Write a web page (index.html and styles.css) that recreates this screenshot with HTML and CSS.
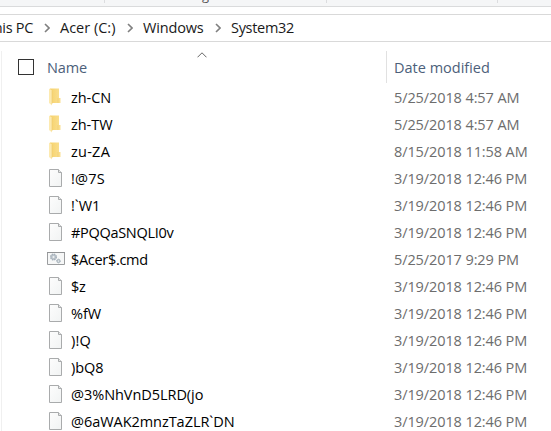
FILE: index.html
```html
<!DOCTYPE html>
<html lang="en">
<head>
<meta charset="utf-8">
<title>System32</title>
<link rel="stylesheet" href="styles.css">
</head>
<body>
<svg width="0" height="0" class="defs">
  <defs>
    <linearGradient id="gold" x2="1"><stop offset="0" stop-color="#f6d26c"/><stop offset="1" stop-color="#fae092"/></linearGradient>
    <linearGradient id="paper" x2="1" y2="1"><stop offset="0" stop-color="#fdfdfd"/><stop offset="1" stop-color="#f1f3f3"/></linearGradient>
    <symbol id="folder" viewBox="0 0 18 20"><path d="M3 1.5H12V11H13.5V16H3Z" fill="url(#gold)"/><path d="M2 1.5L5 3.5V18.5L2 16Z" fill="#fdeab0"/><path d="M5 3.5V17" stroke="#edca6b" stroke-width=".6"/><path d="M11 11V16" stroke="#edcb70" stroke-width=".6"/></symbol>
    <symbol id="file" viewBox="0 0 18 20"><path d="M2.5 1.5H11.5L14.5 4.5V18.5H2.5Z" fill="url(#paper)" stroke="#a9abac"/><path d="M11.5 1.5V4.5H14.5" fill="#e6e7e7" stroke="#a9abac"/></symbol>
    <symbol id="cmd" viewBox="0 0 18 20"><path d="M.5 3.5H17.5V15.5H.5Z" fill="#f6f7f7" stroke="#9b9d9f"/><path d="M0 3.5H18" stroke="#929496"/><circle cx="6.5" cy="8" r="2.8" fill="#bdc5cc" stroke="#a5b0ba" stroke-width="1.4" stroke-dasharray="1.5 .7"/><circle cx="6.5" cy="8" r="1" fill="#eef1f3"/><circle cx="11.5" cy="12" r="1.8" fill="#bcc5cc" stroke="#9aa7b1" stroke-dasharray="1.2 .5"/><circle cx="11.5" cy="12" r=".6" fill="#fff"/></symbol>
    <symbol id="chev" viewBox="0 0 6 10"><path d="M1 1L5 5L1 9" fill="none" stroke="#808080" stroke-width="1.6"/></symbol>
  </defs>
</svg>
<div class="window">
  <div class="ribbon"><i></i><span>g</span><i></i><i></i></div>
  <nav class="address">
    <span class="crumb c1">This PC</span><svg class="chev"><use href="#chev"/></svg>
    <span class="crumb c2">Acer (C:)</span><svg class="chev"><use href="#chev"/></svg>
    <span class="crumb c3">Windows</span><svg class="chev"><use href="#chev"/></svg>
    <span class="crumb c4">System32</span>
  </nav>
  <main class="list">
    <div class="head">
      <div class="name-col"><b class="check"></b><span>Name</span><svg class="sort" viewBox="0 0 10 6"><path d="M.5 5.3L5 .8L9.5 5.3" fill="none" stroke="#666"/></svg></div>
      <div class="date-col">Date modified</div>
    </div>
    <div class="row"><svg><use href="#folder"/></svg><span class="name wide">zh-CN</span><span class="date">5/25/2018 4:57 AM</span></div>
    <div class="row"><svg><use href="#folder"/></svg><span class="name wide">zh-TW</span><span class="date">5/25/2018 4:57 AM</span></div>
    <div class="row"><svg><use href="#folder"/></svg><span class="name wider">zu-ZA</span><span class="date">8/15/2018 11:58 AM</span></div>
    <div class="row"><svg><use href="#file"/></svg><span class="name wider">!@7S</span><span class="date">3/19/2018 12:46 PM</span></div>
    <div class="row"><svg><use href="#file"/></svg><span class="name wide">!`W1</span><span class="date">3/19/2018 12:46 PM</span></div>
    <div class="row"><svg><use href="#file"/></svg><span class="name">#PQQaSNQLI0v</span><span class="date">3/19/2018 12:46 PM</span></div>
    <div class="row"><svg><use href="#cmd"/></svg><span class="name">$Acer$.cmd</span><span class="date">5/25/2017 9:29 PM</span></div>
    <div class="row"><svg><use href="#file"/></svg><span class="name">$z</span><span class="date">3/19/2018 12:46 PM</span></div>
    <div class="row"><svg><use href="#file"/></svg><span class="name wide">%fW</span><span class="date">3/19/2018 12:46 PM</span></div>
    <div class="row"><svg><use href="#file"/></svg><span class="name wider">)!Q</span><span class="date">3/19/2018 12:46 PM</span></div>
    <div class="row"><svg><use href="#file"/></svg><span class="name wide">)bQ8</span><span class="date">3/19/2018 12:46 PM</span></div>
    <div class="row"><svg><use href="#file"/></svg><span class="name wide">@3%NhVnD5LRD(jo</span><span class="date">3/19/2018 12:46 PM</span></div>
    <div class="row"><svg><use href="#file"/></svg><span class="name wide">@6aWAK2mnzTaZLR`DN</span><span class="date">3/19/2018 12:46 PM</span></div>
  </main>
</div>
</body>
</html>
```
FILE: styles.css
```css
* { box-sizing: border-box; }
body { margin: 0; background: #fff; overflow: hidden; }
.defs { position: absolute; }
.window { width: 551px; height: 431px; overflow: hidden; font: 14.5px/27px "Open Sans", "Noto Sans", sans-serif; color: #000; letter-spacing: -0.3px; }
.ribbon { height: 7px; background: #f5f6f7; border-bottom: 1px solid #dadbdc; display: grid; grid-template-columns: 104px 98px 124px 171px 1fr; overflow: hidden; }
.ribbon i { width: 1px; height: 3px; background: #dcdddf; }
.ribbon i:nth-child(1) { grid-column: 2; grid-row: 1; }
.ribbon i:nth-child(3) { grid-column: 4; grid-row: 1; }
.ribbon i:nth-child(4) { grid-column: 5; grid-row: 1; }
.ribbon span { grid-column: 3; grid-row: 1; font-size: 13px; line-height: 14px; height: 14px; margin-top: -12px; color: #555; }
.address { height: 28px; margin-top: 7px; border: solid #d9d9d9; border-width: 1px 0; display: flex; align-items: center; white-space: nowrap; color: #1a1a1a; }
.crumb { line-height: 26px; flex: none; }
.c1 { width: 44px; display: flex; justify-content: flex-end; padding-right: 11px; }
.c2 { width: 67px; letter-spacing: 0; }
.c3 { width: 72px; letter-spacing: -0.15px; }
.chev { width: 6px; height: 10px; flex: none; margin-right: 10px; }
.c4 { letter-spacing: -0.3px; }
.list { margin: 9px 0 0 1px; border-left: 1px solid #f0f0f0; height: 380px; }
.head { display: flex; height: 32px; color: #4c607a; line-height: 33px; }
.name-col { width: 385px; border-right: 1px solid #e1e1e1; display: flex; padding-left: 16px; }
.check { width: 16px; height: 16px; border: 1px solid #333; margin: 8px 13px 0 0; }
.name-col span { width: 149px; letter-spacing: -0.1px; }
.sort { width: 10px; height: 6px; margin-top: 1px; margin-left: 1px; }
.date-col { padding-left: 7px; letter-spacing: 0; }
.row { display: flex; height: 27px; padding-left: 45px; white-space: nowrap; }
.row:nth-child(2) { margin-top: 1px; }
.row svg { width: 18px; height: 20px; margin: 3px 6px 0 0; }
.name { width: 323px; }
.wide { letter-spacing: -0.05px; }
.wider { letter-spacing: 0.25px; }
.date { color: #6d6d6d; letter-spacing: -0.1px; }
```
